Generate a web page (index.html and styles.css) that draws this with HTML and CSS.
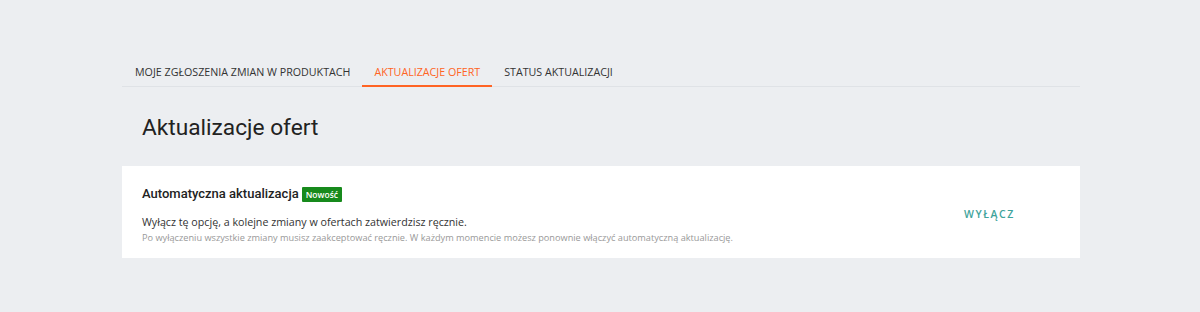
FILE: index.html
```html
<!DOCTYPE html>
<html lang="pl">
<head>
<meta charset="utf-8">
<link rel="stylesheet" href="styles.css">
</head>
<body>
<div class="page">
  <nav class="tabs">
    <a class="tab">MOJE ZGŁOSZENIA ZMIAN W PRODUKTACH</a>
    <a class="tab active">AKTUALIZACJE OFERT</a>
    <a class="tab">STATUS AKTUALIZACJI</a>
  </nav>
  <h1 class="title">Aktualizacje ofert</h1>
  <section class="card">
    <div class="card-text">
      <h2 class="card-title">Automatyczna aktualizacja <span class="badge">Nowość</span></h2>
      <p class="card-desc">Wyłącz tę opcję, a kolejne zmiany w ofertach zatwierdzisz ręcznie.</p>
      <p class="card-note">Po wyłączeniu wszystkie zmiany musisz zaakceptować ręcznie. W każdym momencie możesz ponownie włączyć automatyczną aktualizację.</p>
    </div>
    <button class="action">WYŁĄCZ</button>
  </section>
</div>
</body>
</html>
```

FILE: styles.css
```css
* { box-sizing: border-box; }
html, body { margin: 0; padding: 0; }
body {
  background: #eceef1;
  font-family: "Open Sans", "Liberation Sans", sans-serif;
  color: #222;
}
.page {
  width: 958px;
  margin-left: 122px;
  padding-top: 58px;
}
.tabs {
  display: flex;
  border-bottom: 1px solid #dfe2e6;
  padding-left: 1px;
}
.tab {
  display: block;
  padding: 7px 12px 0;
  height: 29px;
  font-size: 10.7px;
  line-height: 14px;
  color: #333;
  border-bottom: 2px solid transparent;
  margin-bottom: -1px;
}
.tab.active {
  color: #ff6424;
  border-bottom-color: #ff6424;
}
.title {
  font-family: Roboto, "Liberation Sans", sans-serif;
  font-weight: 400;
  font-size: 22.7px;
  line-height: 28px;
  color: #222;
  margin: 0;
  padding: 27px 0 0 20px;
  height: 79px;
}
.card {
  background: #fff;
  display: flex;
  align-items: flex-start;
  padding: 20px 20px 0 20px;
  height: 92px;
}
.card-text { flex: 1; }
.card-title {
  font-family: Roboto, "Liberation Sans", sans-serif;
  font-weight: 500;
  font-size: 13px;
  line-height: 16px;
  margin: 0;
  color: #222;
  display: flex;
  align-items: center;
  gap: 3px;
}
.badge {
  display: inline-block;
  background: #178a1c;
  color: #fff;
  font-family: "Open Sans", sans-serif;
  font-weight: 600;
  font-size: 8.5px;
  line-height: 15px;
  padding: 0 4px;
  border-radius: 1px;
}
.card-desc {
  margin: 12px 0 0;
  font-size: 10.7px;
  line-height: 17px;
  color: #333;
}
.card-note {
  margin: 0;
  font-size: 9.2px;
  line-height: 14px;
  color: #999;
}
.action {
  border: 0;
  background: none;
  font-family: "Open Sans", sans-serif;
  font-weight: 600;
  font-size: 10.5px;
  letter-spacing: 1.6px;
  color: #3ea39b;
  margin: 21px 45px 0 0;
  padding: 0;
}
```
